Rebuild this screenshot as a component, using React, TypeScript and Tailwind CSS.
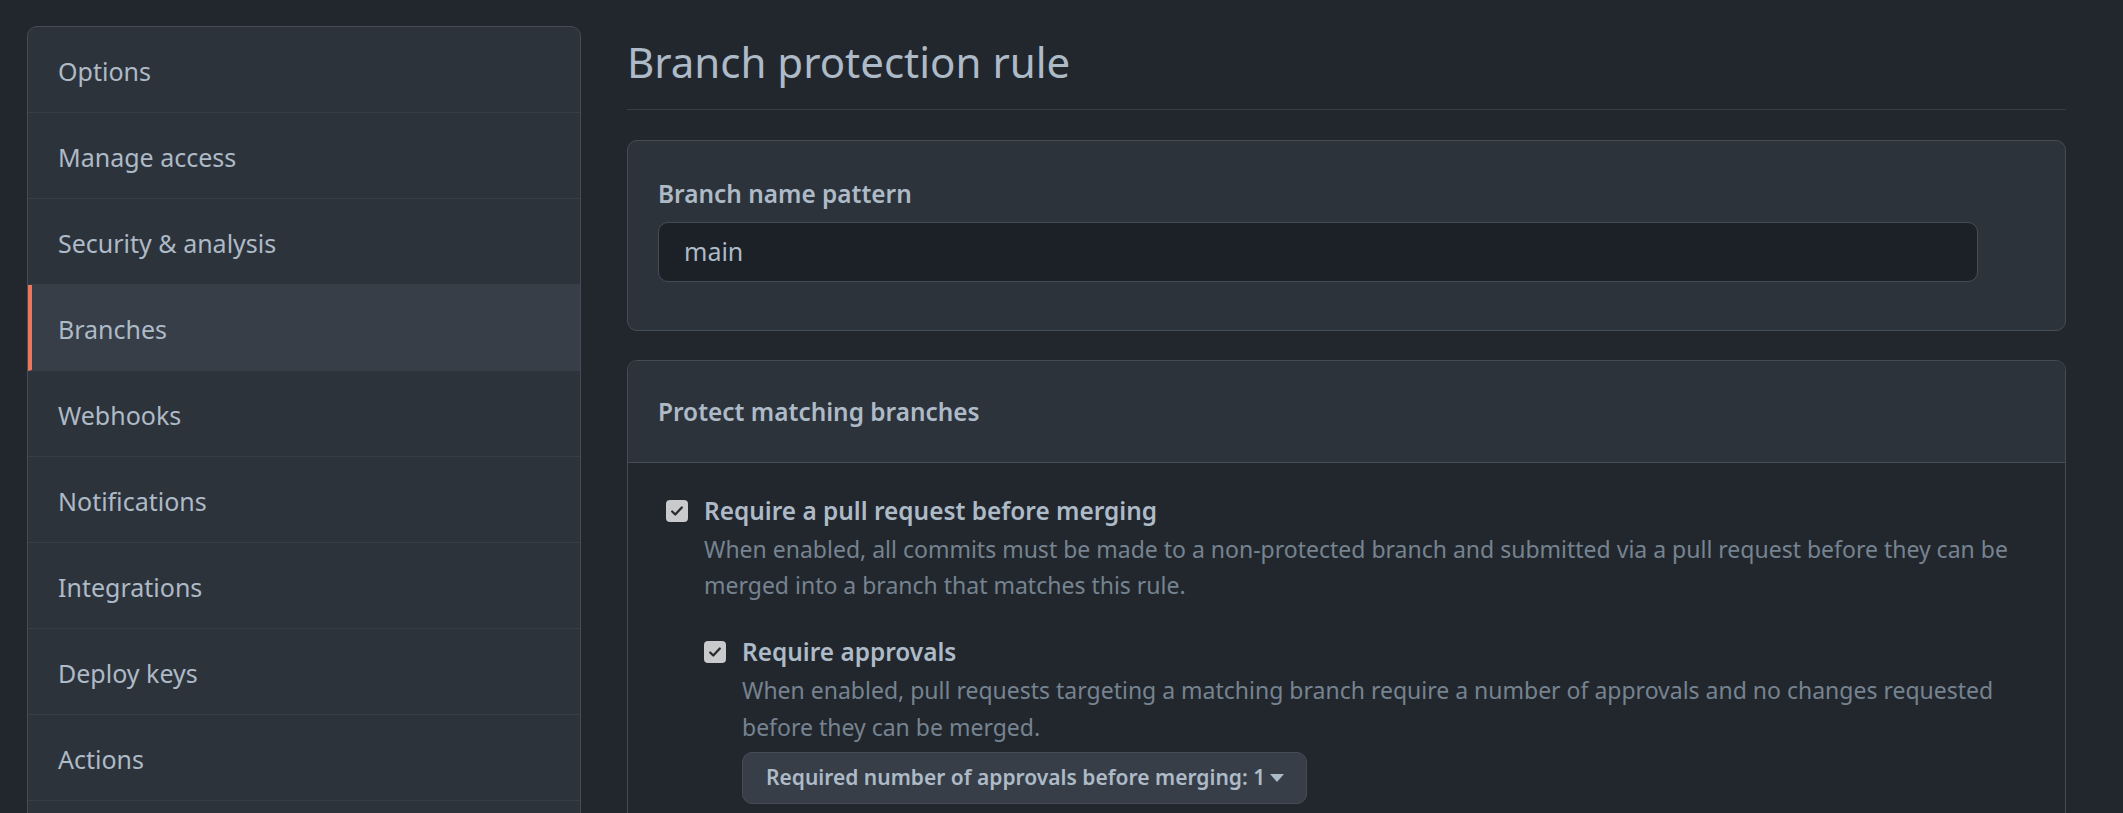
import React from 'react';

const menu = [
  'Options',
  'Manage access',
  'Security & analysis',
  'Branches',
  'Webhooks',
  'Notifications',
  'Integrations',
  'Deploy keys',
  'Actions',
];

function CheckBox() {
  return (
    <span className="flex h-[22px] w-[22px] shrink-0 items-center justify-center rounded-[4px] bg-[#c9cacc]">
      <svg width="14" height="14" viewBox="0 0 16 16" fill="none">
        <path d="M2.5 8.5l3.5 3.5 7.5-8" stroke="#2b2b2b" strokeWidth="2.6" strokeLinecap="round" strokeLinejoin="round" />
      </svg>
    </span>
  );
}

export default function App() {
  return (
    <div
      className="flex h-[813px] w-full gap-[46px] overflow-hidden bg-[#22272e] pl-[27px] pr-[57px] pt-[26px] text-[#adbac7]"
      style={{ fontFamily: '"Segoe UI", "Noto Sans", sans-serif' }}
    >
      {/* settings menu, runs past the bottom of the window */}
      <nav className="h-[900px] w-[554px] shrink-0 rounded-t-[10px] border border-[#444c56] bg-[#2d333b]">
        {menu.map((item) => {
          const active = item === 'Branches';
          return (
            <div
              key={item}
              className={
                active
                  ? 'flex h-[86px] items-center border-b border-[#373e47] border-l-4 border-l-[#ec775c] bg-[#373e47] pl-[26px] pt-[4px] text-[25px]'
                  : 'flex h-[86px] items-center border-b border-[#373e47] pl-[30px] pt-[4px] text-[25px]'
              }
            >
              {item}
            </div>
          );
        })}
      </nav>

      <main className="min-w-0 flex-1">
        <h1 className="mb-[30px] border-b border-[#373e47] pb-[16px] pt-[4px] text-[42px] font-normal leading-[63px]">
          Branch protection rule
        </h1>

        <section className="mb-[29px] rounded-[10px] border border-[#444c56] bg-[#2d333b] px-[30px] pb-[48px] pt-[33px]">
          <label className="block text-[24.4px] font-semibold leading-[40px]">Branch name pattern</label>
          <div className="mt-[8px] flex h-[60px] w-[1320px] items-center rounded-[10px] border border-[#444c56] bg-[#1c2128] px-[25px] text-[25px]">
            main
          </div>
        </section>

        <section className="rounded-t-[10px] border border-[#444c56] pb-[60px]">
          <div className="flex h-[102px] items-center rounded-t-[10px] border-b border-[#444c56] bg-[#2d333b] px-[30px] pt-[2px] text-[24.4px] font-semibold">
            Protect matching branches
          </div>
          <div className="px-[38px] pt-[28px]">
            <div className="flex gap-[16px]">
              <div className="pt-[9px]">
                <CheckBox />
              </div>
              <div>
                <div className="text-[24.4px] font-semibold leading-[40px]">Require a pull request before merging</div>
                <p className="text-[23px] leading-[36px] text-[#768390]">
                  When enabled, all commits must be made to a non-protected branch and submitted via a pull request before they can be merged into a branch that matches this rule.
                </p>

                <div className="mt-[29px] flex gap-[16px]">
                  <div className="pt-[9px]">
                    <CheckBox />
                  </div>
                  <div>
                    <div className="text-[24.4px] font-semibold leading-[40px]">Require approvals</div>
                    <p className="text-[23px] leading-[37px] text-[#768390]">
                      When enabled, pull requests targeting a matching branch require a number of approvals and no changes requested before they can be merged.
                    </p>
                    <button className="mt-[6px] flex h-[52px] items-center gap-[5px] rounded-[10px] border border-[#444c56] bg-[#373e47] pl-[23px] pr-[22px] text-[21px] font-semibold text-[#adbac7]">
                      Required number of approvals before merging: 1
                      <svg width="14" height="8" viewBox="0 0 14 8">
                        <path d="M0 0h14L7 8z" fill="#adbac7" />
                      </svg>
                    </button>
                  </div>
                </div>
              </div>
            </div>
          </div>
        </section>
      </main>
    </div>
  );
}
